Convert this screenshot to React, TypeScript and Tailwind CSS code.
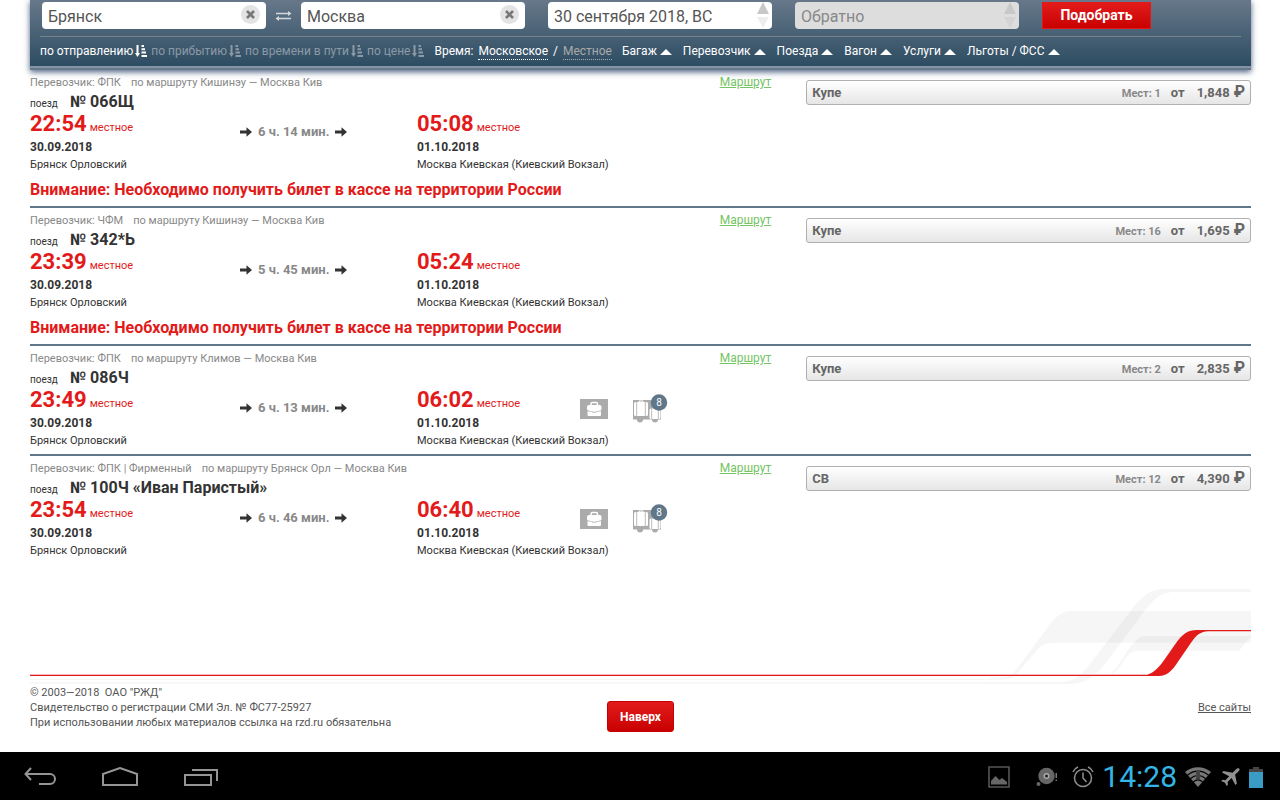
import clsx from "clsx";

type Train = {
  number: string;
  carrier: string;
  route: string;
  depart: string;
  arrive: string;
  duration: string;
  seatClass: string;
  seats: number;
  price: string;
  ticketOffice?: boolean;
  luggage?: boolean;
};

const trains: Train[] = [
  {
    number: "№ 066Щ",
    carrier: "ФПК",
    route: "Кишинэу — Москва Кив",
    depart: "22:54",
    arrive: "05:08",
    duration: "6 ч. 14 мин.",
    seatClass: "Купе",
    seats: 1,
    price: "1,848",
    ticketOffice: true,
  },
  {
    number: "№ 342*Ь",
    carrier: "ЧФМ",
    route: "Кишинэу — Москва Кив",
    depart: "23:39",
    arrive: "05:24",
    duration: "5 ч. 45 мин.",
    seatClass: "Купе",
    seats: 16,
    price: "1,695",
    ticketOffice: true,
  },
  {
    number: "№ 086Ч",
    carrier: "ФПК",
    route: "Климов — Москва Кив",
    depart: "23:49",
    arrive: "06:02",
    duration: "6 ч. 13 мин.",
    seatClass: "Купе",
    seats: 2,
    price: "2,835",
    luggage: true,
  },
  {
    number: "№ 100Ч «Иван Паристый»",
    carrier: "ФПК | Фирменный",
    route: "Брянск Орл — Москва Кив",
    depart: "23:54",
    arrive: "06:40",
    duration: "6 ч. 46 мин.",
    seatClass: "СВ",
    seats: 12,
    price: "4,390",
    luggage: true,
  },
];

const sortOptions = ["по отправлению", "по прибытию", "по времени в пути", "по цене"];
const filters = ["Багаж", "Перевозчик", "Поезда", "Вагон", "Услуги", "Льготы / ФСС"];

function SortIcon() {
  return (
    <svg width="12" height="12" viewBox="0 0 12 12" fill="currentColor" aria-hidden="true">
      <path d="M1.500 0h2v8H5L2.500 12 0 8h1.500zM6.500 0h2.500v2H6.500zM6.500 3.300H10v2H6.500zM6.500 6.600H11v2H6.500zM6.500 10H12v2H6.500z" />
    </svg>
  );
}

function SwapIcon() {
  return (
    <svg width="17" height="12" viewBox="0 0 17 12" fill="none" stroke="#d3d8dc" strokeWidth="1.3" aria-hidden="true">
      <path d="M1 3.500h14M2 8.500h14" />
      <path d="M13 1l3.500 2.500L13 6zM4 6L.5 8.500 4 11z" fill="#d3d8dc" stroke="none" />
    </svg>
  );
}

function ArrowIcon() {
  return (
    <svg width="12" height="10" viewBox="0 0 12 10" fill="#333" aria-hidden="true">
      <path d="M0 3.500h6.500V.300L12 5 6.500 9.700V6.500H0z" />
    </svg>
  );
}

function HandLuggageIcon() {
  return (
    <svg width="28" height="20" viewBox="0 0 28 20" aria-hidden="true">
      <path fill="#ababab" d="M0 0h28v20H0z" />
      <path d="M11 6.500V5a1.500 1.500 0 0 1 1.500-1.500h3.500a1.500 1.500 0 0 1 1.500 1.500v1.500" fill="none" stroke="#fff" strokeWidth="1.500" />
      <path d="M8.500 6h11.500a2 2 0 0 1 1.500 2v2c0 1.300-1 2-2.500 2h-9.500C8 12 7 11.300 7 10V8a2 2 0 0 1 1.500-2z" fill="#fff" />
      <path d="M7.500 12.300h13.500V16a1 1 0 0 1-1 1H8.500a1 1 0 0 1-1-1z" fill="#fff" />
      <path d="M8 11.500c1.500 1 3 1 4.500 1v1h3.500v-1c1.500 0 3 0 4.500-1" fill="none" stroke="#c4c4c4" strokeWidth=".8" />
    </svg>
  );
}

function BaggageIcon() {
  return (
    <svg width="35" height="29" viewBox="0 0 35 29" aria-hidden="true">
      <path fill="#ababab" d="M0 6h28v19.500H0z" />
      <circle cx="7" cy="25.500" r="3" fill="#ababab" />
      <circle cx="22" cy="25.500" r="3" fill="#ababab" />
      <g fill="#fff">
        <rect x="1" y="8" width="14" height="14" rx="1.500" />
        <rect x="16.500" y="14.500" width="11" height="10.500" rx="1.500" />
      </g>
      <path d="M3.700 8v14M12.300 8v14M18.700 14.500V25M25.300 14.500V25" fill="none" stroke="#b4b4b4" strokeWidth=".9" />
      <path d="M6 8.500V7h4v1.500M20.500 15v-1.500h3V15" fill="none" stroke="#fff" />
      <circle cx="26" cy="8.500" r="8.200" fill="#607789" />
      <text x="26" y="12" textAnchor="middle" fill="#fff" fontSize="10">8</text>
    </svg>
  );
}

function StationField({ label, value }: { label: string; value: string }) {
  return (
    <div className="flex h-[27px] w-56 items-start justify-between rounded-sm bg-white pr-1.5 pl-1.5">
      <input aria-label={label} defaultValue={value} className="h-[27px] w-40 pt-0.5 text-base text-[#555] outline-none" />
      <button aria-label="Очистить" className="mt-[3px] flex size-[19px] items-center justify-center rounded-full bg-[#e3e3e3]">
        <svg width="9" height="9" viewBox="0 0 9 9" stroke="#777" strokeWidth="2.600" aria-hidden="true">
          <path d="M1 1l7 7M8 1L1 8" />
        </svg>
      </button>
    </div>
  );
}

function DateField({ label, value, muted }: { label: string; value: string; muted?: boolean }) {
  return (
    <div
      className={clsx(
        "flex h-[27px] w-56 items-start justify-between rounded-sm pr-[3px] pl-1.5",
        muted ? "bg-[#ddd]" : "bg-white",
      )}
    >
      <input
        aria-label={label}
        defaultValue={value}
        className={clsx("h-[27px] w-48 pt-0.5 text-base outline-none", muted ? "text-[#888]" : "text-[#555]")}
      />
      <svg width="12" height="26" viewBox="0 0 12 26" aria-hidden="true">
        <path d="M6 0l6 12H0z" fill="#c8c8c8" />
        <path d="M6 26l6-11H0z" fill={muted ? "#d3d3d3" : "#ededed"} />
      </svg>
    </div>
  );
}

function SearchHeader() {
  return (
    <header className="border-b-2 border-[#67788a] shadow-[0_2px_6px_#4b6180]">
      <div className="border-b-2 border-[#8494a5] bg-linear-to-b from-[#67788a] to-[#2d4c62] px-2.5 pt-0.5">
        <form className="flex border-b border-[#74848c] pb-[7px] pl-0.5">
          <StationField label="Откуда" value="Брянск" />
          <button type="button" aria-label="Поменять местами" className="flex w-[35px] items-center justify-center">
            <SwapIcon />
          </button>
          <StationField label="Куда" value="Москва" />
          <div className="ml-[23px] flex gap-[23px]">
            <DateField label="Туда" value="30 сентября 2018, ВС" />
            <DateField label="Обратно" value="Обратно" muted />
            <button
              type="button"
              className="h-[27px] w-[109px] border border-[#e21a1a] bg-linear-to-b from-[#e21a1a] to-[#c80000] pb-0.5 text-sm font-bold text-white"
            >
              Подобрать
            </button>
          </div>
        </form>
        <div className="flex h-[29px] items-center gap-2.5 pb-0.5 text-xs whitespace-nowrap text-white">
          <div className="flex gap-1">
            {sortOptions.map((option, i) => (
              <button key={option} className={clsx("flex items-center gap-0.5", i > 0 && "text-[#8b9aa6]")}>
                {option}
                <SortIcon />
              </button>
            ))}
          </div>
          <div className="flex gap-[5px] pt-0.5">
            <span>Время:</span>
            <button className="border-b border-dotted border-white leading-4">Московское</button>
            <span>/</span>
            <button className="border-b border-dotted border-[#aaa] leading-4 text-[#aaa]">Местное</button>
          </div>
          <div className="flex gap-[11px]">
            {filters.map((filter) => (
              <button key={filter} className="flex items-center gap-[3px]">
                {filter}
                <svg width="12" height="6" viewBox="0 0 12 6" fill="currentColor" className="mt-0.5" aria-hidden="true">
                  <path d="M6 0l6 6H0z" />
                </svg>
              </button>
            ))}
          </div>
        </div>
      </div>
    </header>
  );
}

function Stop({ time, date, station }: { time: string; date: string; station: string }) {
  return (
    <div>
      <p className="flex h-6 items-baseline gap-[3px] leading-6 text-[#e21a1a]">
        <span className="text-[22px] font-bold">{time}</span>
        <span className="text-[11px]">местное</span>
      </p>
      <p className="text-xs leading-[22px] font-bold">{date}</p>
      <p className="text-[11px] leading-[14px]">{station}</p>
    </div>
  );
}

function TrainRow({ train }: { train: Train }) {
  return (
    <li className="grid grid-cols-[5fr_3fr] gap-[35px] border-b-2 border-[#607789] pt-[5px] whitespace-nowrap text-[#333] last:border-b-0">
      <div>
        <div className="flex h-4 items-start justify-between">
          <p className="flex gap-2.5 text-[11px] leading-4 text-[#888]">
            <span>Перевозчик: {train.carrier}</span>
            <span>по маршруту {train.route}</span>
          </p>
          <a href="#route" className="text-xs leading-[14px] text-[#74c365] underline">
            Маршрут
          </a>
        </div>
        <h2 className="flex h-[21px] items-baseline gap-3">
          <span className="text-[10px] leading-[22px]">поезд</span>
          <span className="text-base leading-[22px] font-bold">{train.number}</span>
        </h2>
        <div className="grid grid-cols-[210px_177px_163px_1fr]">
          <Stop time={train.depart} date="30.09.2018" station="Брянск Орловский" />
          <p className="flex h-10 items-center gap-1.5 text-[13px] font-bold text-[#888]">
            <ArrowIcon />
            {train.duration}
            <ArrowIcon />
          </p>
          <Stop time={train.arrive} date="01.10.2018" station="Москва Киевская (Киевский Вокзал)" />
          {train.luggage && (
            <div className="flex items-center gap-[25px] self-start pt-1.5">
              <HandLuggageIcon />
              <BaggageIcon />
            </div>
          )}
        </div>
        {train.ticketOffice ? (
          <p className="pt-0.5 text-base leading-8 font-bold text-[#e21a1a]">
            Внимание: Необходимо получить билет в кассе на территории России
          </p>
        ) : (
          <div className="h-1.5" />
        )}
      </div>
      <div className="pt-[5px]">
        <button className="flex h-[25px] w-full items-baseline rounded-[3px] border border-[#b0b0b0] bg-linear-to-b from-white to-[#e6e6e6] px-[5px] text-[13px] leading-[22px] font-bold text-[#666]">
          <span>{train.seatClass}</span>
          <span className="ml-auto text-[11px] text-[#888]">Мест: {train.seats}</span>
          <span className="ml-2.5">от</span>
          <span className="ml-3">{train.price}</span>
          <span className="ml-1 text-base leading-[22px]">₽</span>
        </button>
      </div>
    </li>
  );
}

function Swoosh() {
  return (
    <div className="mt-4 flex items-end">
      <div className="h-[11px] flex-1 border-t border-[#f6b8b8]">
        <div className="h-1 border-t border-[#e21a1a]" />
        <div className="h-[3px] border-t border-[#f7f7f7]" />
        <div className="border-t-2 border-[#f7f7f7]" />
      </div>
      <svg width="261" height="105" viewBox="0 0 783 315" aria-hidden="true">
        <g fill="#000" fillOpacity=".035">
          <path d="M0 306H210C265 306 285 270 330 212L435 75C465 38 490 27 525 27H783V36H555C520 36 495 52 470 85L350 245C315 292 285 312 230 312H0z" />
          <path d="M0 293H35C65 293 75 273 100 240L180 132C205 102 220 93 245 93H783V188H195C165 188 152 196 135 218L88 272C70 296 55 299 35 299H0z" />
          <path d="M362 283C390 255 410 210 430 190C445 173 452 168 470 168H783L748 212H445C425 212 417 220 405 237C390 260 380 275 368 283z" />
        </g>
        <path d="M0 282H470V285H0z" fill="#f6b8b8" />
        <path
          d="M0 285H470C490 280 506 264 522 241L556 192C578 162 592 150 622 150H783V153.500H655C632 155 620 163 603 188L563 247C545 274 530 288 508 288H0z"
          fill="#e21a1a"
        />
      </svg>
    </div>
  );
}

function Footer() {
  return (
    <footer className="grid grid-cols-[1fr_auto_1fr] items-start pb-5 text-[11px] leading-[15px] text-[#555]">
      <div className="whitespace-nowrap">
        <p className="whitespace-pre">{'© 2003—2018  ОАО "РЖД"'}</p>
        <p>Свидетельство о регистрации СМИ Эл. № ФС77-25927</p>
        <p>При использовании любых материалов ссылка на rzd.ru обязательна</p>
      </div>
      <button className="mt-4 h-[31px] w-[67px] rounded-[3px] border border-[#c80000] bg-linear-to-b from-[#e21a1a] to-[#c80000] text-xs font-bold text-white">
        Наверх
      </button>
      <a href="#sites" className="mt-[15px] justify-self-end underline">
        Все сайты
      </a>
    </footer>
  );
}

function SystemBar() {
  return (
    <nav className="mt-auto flex h-12 items-center justify-between bg-black pt-0.5 pr-[17px] pl-6">
      <div className="flex items-center gap-11 text-[#959595]">
        <button aria-label="Назад">
          <svg width="34" height="20" viewBox="0 0 34 20" fill="none" stroke="currentColor" strokeWidth="2">
            <path d="M7 1L1.500 7 7 13M1.500 7H26a5 5 0 0 1 0 10H15" />
          </svg>
        </button>
        <button aria-label="Домой">
          <svg width="36" height="20" viewBox="0 0 36 20" fill="none" stroke="currentColor" strokeWidth="2">
            <path d="M1 18V7l17-6 17 6v11z" />
          </svg>
        </button>
        <button aria-label="Недавние приложения">
          <svg width="36" height="20" viewBox="0 0 36 20" fill="none" stroke="currentColor" strokeWidth="2">
            <path d="M3 8h26v10H3zM10 3h25v11" />
          </svg>
        </button>
      </div>
      <div className="flex items-center text-[#777]">
        <svg width="22" height="22" viewBox="0 0 22 22" aria-hidden="true">
          <path d="M1 1h20v20H1z" fill="none" stroke="#555" strokeWidth="1.600" />
          <path d="M3 18.500V15l4.500-5 4 4 2.500-2 5 4v2.500z" fill="#666" />
        </svg>
        <svg width="22" height="20" viewBox="0 0 22 20" className="ml-[26px]" aria-hidden="true">
          <circle cx="10.500" cy="9" r="8.200" fill="#666" />
          <circle cx="10.500" cy="9" r="3" fill="#aaa" />
          <circle cx="10.500" cy="9" r="1.500" fill="#222" />
          <circle cx="2.500" cy="17" r="2" fill="#666" />
          <path d="M19.500 6h1.500v5h-1.500zM19.500 12.500h1.500v1.500h-1.500z" fill="#777" />
        </svg>
        <svg width="22" height="22" viewBox="0 0 22 22" fill="none" stroke="#909090" strokeWidth="1.500" className="ml-3.5" aria-hidden="true">
          <circle cx="11" cy="12" r="8.500" />
          <path d="M11 6.500V12l3.500 4M1 6c1-2.500 2.500-4 5-5M21 6c-1-2.500-2.500-4-5-5" />
        </svg>
        <time className="ml-2 text-[30px] leading-[46px] text-[#33b5e5]">14:28</time>
        <svg width="26" height="20" viewBox="0 0 26 20" className="ml-2" aria-hidden="true">
          <path d="M0 5C7-1.500 19-1.500 26 5L13 20z" fill="#777" />
          <path d="M2.500 8.300c6-5.500 15-5.500 21 0M5.500 11.500c4.500-4 10.500-4 15 0M8.500 14.800c3-2.500 6-2.500 9 0" fill="none" stroke="#000" strokeWidth="1.200" />
          <path d="M11 4h4v8h-4z" fill="#444" />
        </svg>
        <svg width="19" height="18" viewBox="0 0 19 18" fill="#909090" className="ml-2.5" aria-hidden="true">
          <path d="M18.300.700c-1.200-.8-2.700-.1-4 1.200L11.500 4.800 2.500 3 1 4.500l7.200 3.700-3.900 4L1.500 11.800.3 13l3.700 1.700L5.600 18l1.300-1.200-.3-2.700 4-4 3.800 7 1.500-1.500-1.800-9L17 4c1.300-1.300 2-2.500 1.300-3.300z" />
        </svg>
        <svg width="14" height="21" viewBox="0 0 14 21" className="ml-[9px]" aria-hidden="true">
          <path d="M4 0h6v2h4v4H0V2h4z" fill="#454545" />
          <path d="M0 5h14v16H0z" fill="#3a9cc4" />
        </svg>
      </div>
    </nav>
  );
}

export default function App() {
  return (
    <div className="flex min-h-screen flex-col bg-white font-['Roboto',sans-serif]">
      <div className="pr-[29px] pl-[30px]">
        <SearchHeader />
        <main>
          <ul>
            {trains.map((train) => (
              <TrainRow key={train.number} train={train} />
            ))}
          </ul>
        </main>
        <Swoosh />
        <Footer />
      </div>
      <SystemBar />
    </div>
  );
}
